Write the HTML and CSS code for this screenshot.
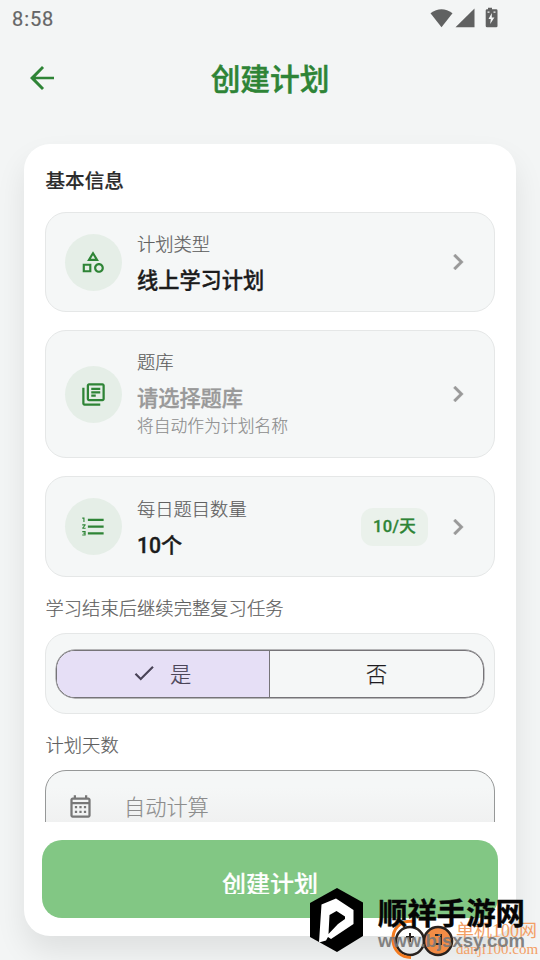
FILE: index.html
```html
<!DOCTYPE html>
<html lang="zh-CN">
<head>
<meta charset="utf-8">
<title>创建计划</title>
<link rel="stylesheet" href="styles.css">
</head>
<body>
<div class="screen">
  <div class="status">
    <span class="clock">8:58</span>
    <svg class="status-icons" width="68" height="22" viewBox="0 0 68 22">
      <path d="M0.5 6.3Q11.5-2 22.5 6.3L11.5 20.3Z"/>
      <path d="M44.5 1.5V20.3H25.5Z"/>
      <path fill-rule="evenodd" d="M58 2.2V.7h4v1.5h4.200q1.300 0 1.300 1.300v15.500q0 1.300-1.300 1.300H57q-1.300 0-1.300-1.300V3.500q0-1.300 1.300-1.300ZM61.800 6 58.500 12h2.300l-.6 5 4.200-6.500h-2.600ZM57.500 4.500h2v1.200h-2ZM63.500 4.500h2v1.200h-2Z"/>
    </svg>
  </div>
  <header class="bar">
    <svg class="back" width="36" height="36" viewBox="0 0 24 24"><path d="M20 11.100H7.700l5.650-5.700L12 4l-8 8 8 8 1.350-1.400L7.700 12.900H20z"/></svg>
    <h1>创建计划</h1>
  </header>
  <main class="card">
    <div class="scroll">
      <h2>基本信息</h2>
      <section class="tile tile-type">
        <div class="disc"><svg width="26" height="26" viewBox="0 0 24 24"><path d="M12 2l-5.500 9h11L12 2zm0 3.840L13.930 9h-3.870L12 5.840zM17.500 13c-2.490 0-4.500 2.010-4.500 4.500s2.010 4.500 4.500 4.500 4.500-2.010 4.500-4.500-2.010-4.500-4.500-4.500zm0 7c-1.380 0-2.500-1.120-2.500-2.500s1.120-2.500 2.500-2.500 2.500 1.120 2.500 2.500-1.120 2.500-2.500 2.500zM2.500 21.500h8v-8h-8v8zm2-6h4v4h-4v-4z"/></svg></div>
        <div class="info"><span class="label">计划类型</span><strong>线上学习计划</strong></div>
        <svg class="chev" width="32" height="32" viewBox="0 0 24 24"><path d="M10 6L8.590 7.410 13.170 12l-4.580 4.590L10 18l6-6z"/></svg>
      </section>
      <section class="tile tile-bank">
        <div class="disc"><svg width="27" height="27" viewBox="0 0 24 24"><path d="M4 6H2v14c0 1.100.9 2 2 2h14v-2H4V6zm16-4H8c-1.100 0-2 .9-2 2v12c0 1.100.9 2 2 2h12c1.100 0 2-.9 2-2V4c0-1.100-.9-2-2-2zm0 14H8V4h12v12zM10 9h8v2h-8zm0 3h4v2h-4zm0-6h8v2h-8z"/></svg></div>
        <div class="info"><span class="label">题库</span><strong class="empty">请选择题库</strong><small>将自动作为计划名称</small></div>
        <svg class="chev" width="32" height="32" viewBox="0 0 24 24"><path d="M10 6L8.590 7.410 13.170 12l-4.580 4.590L10 18l6-6z"/></svg>
      </section>
      <section class="tile tile-count">
        <div class="disc"><svg width="27" height="27" viewBox="0 0 24 24"><path d="M2 17h2v.5H3v1h1v.5H2v1h3v-4H2v1zm1-9h1V4H2v1h1v3zm-1 3h1.800L2 13.100v.9h3v-1H3.200L5 10.900V10H2v1zm5-6v2h14V5H7zm0 14h14v-2H7v2zm0-6h14v-2H7v2z"/></svg></div>
        <div class="info"><span class="label">每日题目数量</span><strong>10个</strong></div>
        <span class="chip">10/天</span>
        <svg class="chev" width="32" height="32" viewBox="0 0 24 24"><path d="M10 6L8.590 7.410 13.170 12l-4.580 4.590L10 18l6-6z"/></svg>
      </section>
      <p class="label caption review">学习结束后继续完整复习任务</p>
      <div class="seg-wrap">
        <div class="seg">
          <div class="opt on"><svg width="26" height="26" viewBox="0 0 24 24"><path d="M9 16.170L4.830 12l-1.420 1.410L9 19 21 7l-1.410-1.410z"/></svg><span>是</span></div>
          <div class="opt"><span>否</span></div>
        </div>
      </div>
      <p class="label caption days">计划天数</p>
      <div class="field">
        <svg width="27" height="27" viewBox="0 0 24 24"><path d="M19 4h-1V2h-2v2H8V2H6v2H5c-1.100 0-2 .9-2 2v14c0 1.100.9 2 2 2h14c1.100 0 2-.9 2-2V6c0-1.100-.9-2-2-2zm0 16H5V10h14v10zm0-12H5V6h14v2zM7 11.500h2v2H7zm4 0h2v2h-2zm4 0h2v2h-2zM7 15.800h2v2H7zm4 0h2v2h-2zm4 0h2v2h-2z"/></svg>
        <span>自动计算</span>
      </div>
    </div>
    <div class="submit"><span>创建计划</span></div>
  </main>

  <div class="mark-danji">
    <svg width="70" height="44" viewBox="0 0 70 44">
      <circle cx="23" cy="24" r="14" fill="none" stroke="#28221f" stroke-width="2.500"/>
      <path d="M27 4.500C13 3 5 12 6 24c1 10 8 16.500 18 16.500" fill="none" stroke="#f47b20" stroke-width="3"/>
      <circle cx="51" cy="24" r="14" fill="#f28c46" stroke="#28221f" stroke-width="2.500"/>
      <path d="M19 20h8M23 16v9M48 18h6v9h-5" fill="none" stroke="#28221f" stroke-width="2"/>
    </svg>
    <div class="danji-text"><b>单机100网</b><i>danji100.com</i></div>
  </div>
  <div class="mark-sx">
    <svg width="56" height="66" viewBox="0 0 56 66">
      <path d="M28 1 54 15.500V49L28 65 1 50V16Z"/>
      <path fill="#fff" d="M12.500 17.500 27 11.500 44.500 23V37L22 52 19 50 17 53.500 10 55.500Z"/>
      <path d="M20.500 28 27.500 24 36 29.500V32L29 37 19.500 47Z"/>
    </svg>
    <div class="sx-text"><b>顺祥手游网</b><span>www.bjsxsy.com</span></div>
  </div>
</div>
</body>
</html>
```
FILE: styles.css
```css
* { box-sizing: border-box; }
body {
  margin: 0;
  font-family: Roboto, "Noto Sans CJK SC", sans-serif;
  background: #f3f5f5;
}
h1, h2, p { margin: 0; }
svg { display: block; flex: none; }
.screen {
  position: relative;
  width: 540px;
  height: 960px;
  overflow: hidden;
}
.status {
  height: 36px;
  padding: 0 42px 0 12px;
  display: flex;
  align-items: center;
  justify-content: space-between;
}
.clock { font-size: 20px; letter-spacing: .9px; color: #666; padding-top: 2px; -webkit-text-stroke: .2px #666; }
.status-icons { fill: #606161; margin-bottom: 1px; }
.bar {
  height: 84px;
  margin-bottom: 24px;
  padding: 0 24px;
  display: grid;
  grid-template-columns: 36px 1fr 36px;
  align-items: center;
}
.back { fill: #2e8436; }
.bar h1 {
  text-align: center;
  font-size: 29.700px;
  line-height: 40px;
  font-weight: 500;
  color: #2e8436;
  -webkit-text-stroke: .45px #2e8436;
  padding-top: 4px;
}
.card {
  width: 492px;
  height: 792px;
  margin: 0 24px;
  border-radius: 26px;
  background: #fff;
  box-shadow: 0 16px 30px rgba(0, 0, 0, .085);
}
.scroll {
  height: 678px;
  padding: 0 21px;
  overflow: hidden;
}
h2 {
  height: 68px;
  padding-top: 23px;
  padding-left: .5px;
  font-size: 19.600px;
  line-height: 30px;
  font-weight: 500;
  color: #2b2b2b;
  -webkit-text-stroke: .2px #2b2b2b;
}
.tile {
  display: flex;
  align-items: center;
  width: 450px;
  padding: 0 20px 0 18.500px;
  border: 1.500px solid #e5e7e7;
  border-radius: 21px;
  background: #f5f7f7;
}
.tile-type { height: 100px; margin-bottom: 18px; }
.tile-bank { height: 128px; margin-bottom: 18px; }
.tile-count { height: 101px; }
.disc {
  width: 57px;
  height: 57px;
  border-radius: 50%;
  background: #e5eee7;
  display: flex;
  align-items: center;
  justify-content: center;
  fill: #2e8436;
}
.info { flex: 1; margin-left: 15.500px; display: flex; flex-direction: column; padding-top: 3px; }
.tile-bank .info { padding-top: 0; margin-top: -1px; }
.label { font-size: 18.300px; font-weight: 300; line-height: 28px; color: #606060; -webkit-text-stroke: .2px currentColor; }
strong { font-size: 21.200px; line-height: 32px; margin-top: 6px; margin-bottom: -1px; font-weight: 500; color: #1c1c1c; -webkit-text-stroke: .35px currentColor; }
strong.empty { color: #999; }
small { font-size: 16.800px; font-weight: 300; line-height: 24px; color: #8c8c8c; -webkit-text-stroke: .15px currentColor; }
.chev { fill: #999; stroke: #999; stroke-width: .3px; }
.chip {
  width: 67px;
  height: 38px;
  margin-right: 14px;
  border-radius: 12px;
  background: #eaf1eb;
  text-align: center;
  font-size: 16.500px;
  line-height: 37px;
  font-weight: 500;
  letter-spacing: .3px;
  color: #2e8436;
  -webkit-text-stroke: .3px #2e8436;
}
.caption { height: 56px; padding: 18px 0 0 .5px; letter-spacing: .03px; }
.seg-wrap {
  height: 81px;
  padding: 16px 10px 15px;
  border: 1.500px solid #e5e7e7;
  border-radius: 21px;
  background: #f5f7f7;
}
.seg {
  height: 48px;
  display: flex;
  overflow: hidden;
  border: 1.500px solid #767478;
  border-radius: 19px;
  box-shadow: 0 0 0 .4px #767478;
}
.opt {
  width: 50%;
  display: flex;
  align-items: center;
  justify-content: center;
  gap: 13px;
  padding-bottom: 3px;
  font-size: 21.200px;
  font-weight: 300;
  color: #1d1b20;
  -webkit-text-stroke: .25px currentColor;
}
.opt.on { padding-right: 4px; background: #e6dff6; border-right: 1.500px solid #767478; color: #4a4458; fill: #4a4458; }
.field {
  height: 84px;
  display: flex;
  gap: 30px;
  padding: 22px 21px;
  border: 1.500px solid #969898;
  border-radius: 21px;
  background: linear-gradient(#f5f7f7 20%, #f0f1f1 62%);
  fill: #777;
  font-size: 21.200px;
  font-weight: 300;
  line-height: 30px;
  color: #8c8c8c;
  -webkit-text-stroke: .15px currentColor;
}
.submit {
  height: 78px;
  margin: 18px;
  border-radius: 20px;
  background: #82c784;
  display: flex;
  justify-content: center;
  align-items: flex-start;
}
.submit span {
  height: 54px;
  padding-top: 28px;
  overflow: hidden;
  font-size: 24px;
  line-height: 34px;
  font-weight: 500;
  color: #fff;
  -webkit-text-stroke: .2px #fff;
}
.mark-danji {
  position: absolute;
  left: 387px;
  top: 917px;
  display: flex;
  color: #f3a066;
}
.danji-text { margin-left: -1px; display: flex; flex-direction: column; white-space: nowrap; font-family: "Liberation Serif", "Noto Sans CJK SC", serif; }
.danji-text b { font-size: 18px; line-height: 24px; font-weight: 400; margin-top: 2px; }
.danji-text i { font-size: 15px; line-height: 16px; font-style: normal; margin-top: -2px; }
.mark-sx { position: absolute; left: 309px; top: 887px; display: flex; }
.sx-text { margin-left: 13px; display: flex; flex-direction: column; white-space: nowrap; }
.sx-text b { font-size: 29.400px; line-height: 40px; margin-top: 7px; font-weight: 700; color: #050505; -webkit-text-stroke: .4px #050505; }
.sx-text span { font-family: "Liberation Sans", sans-serif; font-size: 18.500px; line-height: 20px; margin-top: -3px; font-weight: 700; color: #777; opacity: .9; }
```
